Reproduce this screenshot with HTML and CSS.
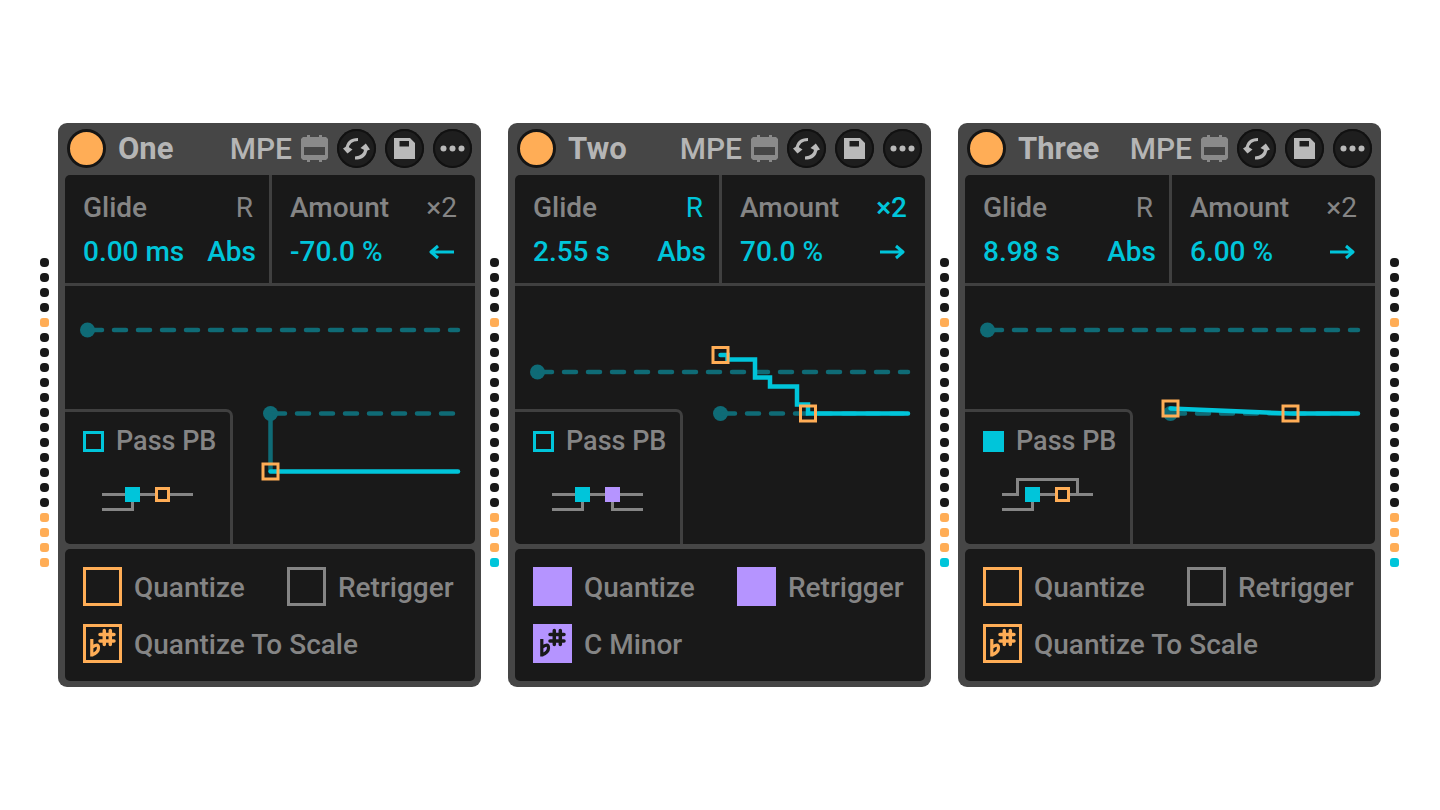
FILE: index.html
```
<!DOCTYPE html>
<html lang="en">
<head>
<meta charset="utf-8">
<title>Glide devices</title>
<link rel="stylesheet" href="styles.css">
</head>
<body>
<svg class="defs" aria-hidden="true">
  <symbol id="chip" viewBox="0 0 27 27">
    <path fill-rule="evenodd" d="M6 0h3v2h9V0h3v2h4l2 2v19l-2 2h-4v2h-3v-2H9v2H6v-2H2l-2-2V4l2-2h4zM3 12v8h21v-8z" fill="#8a8a8a"/>
  </symbol>
  <symbol id="swap" viewBox="0 0 39 39">
    <path d="M21 10.500Q11 10.500 10 20" fill="none" stroke="#b9b9b9" stroke-width="3.200"/>
    <path d="M6 19.500L10.500 24.500L15.500 20.500L10 17z" fill="#b9b9b9"/>
    <path d="M18 29Q28 29 29 19.500" fill="none" stroke="#b9b9b9" stroke-width="3.200"/>
    <path d="M23.500 19L28.800 14.500L33 20.500L29 22z" fill="#b9b9b9"/>
  </symbol>
  <symbol id="save" viewBox="0 0 39 39">
    <path fill-rule="evenodd" d="M9 9h16l5 5v16H9zM14.500 12v5.500h9.500v-5.500z" fill="#b9b9b9"/>
  </symbol>
  <symbol id="more" viewBox="0 0 39 39">
    <g fill="#b9b9b9"><circle cx="10.500" cy="19.500" r="3"/><circle cx="19.500" cy="19.500" r="3"/><circle cx="28.500" cy="19.500" r="3"/></g>
  </symbol>
  <symbol id="arrow" viewBox="0 0 26 16">
    <path d="M1 8H24M17 2L24 8L17 14" fill="none" stroke="currentColor" stroke-width="3" stroke-linejoin="round"/>
  </symbol>
  <symbol id="scale" viewBox="0 0 39 39">
    <path d="M8.800 15V32.500M8.800 23.500Q15.500 18.500 15.500 24Q15.500 28.500 8.800 31" fill="none" stroke="currentColor" stroke-width="3.200"/>
    <path d="M21.300 6.500V20.500M27.300 6.500V20.500M17 10.500H31M17 17H31" fill="none" stroke="currentColor" stroke-width="3.500" stroke-linecap="round"/>
  </symbol>
</svg>

<main class="rack">
  <div class="meter" aria-hidden="true"><i></i><i></i><i></i><i></i><i class="on"></i><i></i><i></i><i></i><i></i><i></i><i></i><i></i><i></i><i></i><i></i><i></i><i></i><i class="on"></i><i class="on"></i><i class="on"></i><i class="on"></i></div>

  <section class="device">
    <header class="bar">
      <button class="power" aria-label="Device on"></button>
      <h2 class="title">One</h2>
      <button class="mpe">MPE</button>
      <svg class="chip"><use href="#chip"/></svg>
      <button class="round" aria-label="Swap"><svg><use href="#swap"/></svg></button>
      <button class="round" aria-label="Save"><svg><use href="#save"/></svg></button>
      <button class="round" aria-label="More"><svg><use href="#more"/></svg></button>
    </header>
    <div class="panel">
      <div class="params">
        <div class="param">
          <span>Glide</span><button class="switch">R</button>
          <output class="value">0.00 ms</output><button class="value">Abs</button>
        </div>
        <div class="param">
          <span>Amount</span><button class="switch">×2</button>
          <output class="value">-70.0 %</output><button class="value" aria-label="Left"><svg class="arrow left"><use href="#arrow"/></svg></button>
        </div>
      </div>
      <div class="view">
        <svg class="curve" viewBox="0 0 410 258" stroke-width="4.500">
          <g class="target">
            <circle cx="22.500" cy="44" r="7.500"/><path class="dash" d="M25 44H393"/>
            <circle cx="205.500" cy="127.500" r="7.500"/><path class="dash" d="M208 127.500H391"/>
            <path d="M205.500 127.500V185.500"/>
          </g>
          <path class="line" d="M205.500 185.500H393"/>
          <rect class="handle" x="198" y="178" width="15" height="15"/>
        </svg>
        <div class="pass">
          <label class="check middle"><input type="checkbox" class="box small cyan">Pass PB</label>
          <svg class="route" viewBox="0 0 91 33">
            <path class="wire" d="M0 16.500H91M0 31.500H30.500V16.500"/>
            <rect x="23" y="9" width="15" height="15" fill="#00c5da"/>
            <rect x="54.500" y="10.500" width="12" height="12" fill="#191919" stroke="#ffad56" stroke-width="3"/>
          </svg>
        </div>
      </div>
    </div>
    <div class="panel options">
      <label class="check"><input type="checkbox" class="box orange">Quantize</label>
      <label class="check"><input type="checkbox" class="box grey">Retrigger</label>
      <label class="check wide"><span class="stack orange"><input type="checkbox" class="box orange"><svg class="sign"><use href="#scale"/></svg></span>Quantize To Scale</label>
    </div>
  </section>

  <div class="meter" aria-hidden="true"><i></i><i></i><i></i><i></i><i class="on"></i><i></i><i></i><i></i><i></i><i></i><i></i><i></i><i></i><i></i><i></i><i></i><i></i><i class="on"></i><i class="on"></i><i class="on"></i><i class="low"></i></div>

  <section class="device">
    <header class="bar">
      <button class="power" aria-label="Device on"></button>
      <h2 class="title">Two</h2>
      <button class="mpe">MPE</button>
      <svg class="chip"><use href="#chip"/></svg>
      <button class="round" aria-label="Swap"><svg><use href="#swap"/></svg></button>
      <button class="round" aria-label="Save"><svg><use href="#save"/></svg></button>
      <button class="round" aria-label="More"><svg><use href="#more"/></svg></button>
    </header>
    <div class="panel">
      <div class="params">
        <div class="param">
          <span>Glide</span><button class="switch active">R</button>
          <output class="value">2.55 s</output><button class="value">Abs</button>
        </div>
        <div class="param">
          <span>Amount</span><button class="switch active bold">×2</button>
          <output class="value">70.0 %</output><button class="value" aria-label="Right"><svg class="arrow"><use href="#arrow"/></svg></button>
        </div>
      </div>
      <div class="view">
        <svg class="curve" viewBox="0 0 410 258" stroke-width="4.500">
          <g class="target">
            <circle cx="22.500" cy="86" r="7.500"/><path class="dash" d="M25 86H393"/>
            <circle cx="205.500" cy="127.500" r="7.500"/><path class="dash" d="M208 127.500H391"/>
          </g>
          <path class="line" d="M205.500 69H212.500V73.500H240V91.500H255V100.500H282V118.500H293V127.500H393"/>
          <rect class="handle" x="198" y="61.500" width="15" height="15"/>
          <rect class="handle" x="285.500" y="120" width="15" height="15"/>
        </svg>
        <div class="pass">
          <label class="check middle"><input type="checkbox" class="box small cyan">Pass PB</label>
          <svg class="route" viewBox="0 0 91 33">
            <path class="wire" d="M0 16.500H91M0 31.500H30.500V16.500M91 31.500H60.500V16.500"/>
            <rect x="23" y="9" width="15" height="15" fill="#00c5da"/>
            <rect x="53" y="9" width="15" height="15" fill="#b594ff"/>
          </svg>
        </div>
      </div>
    </div>
    <div class="panel options">
      <label class="check"><input type="checkbox" class="box violet" checked>Quantize</label>
      <label class="check"><input type="checkbox" class="box violet" checked>Retrigger</label>
      <label class="check wide"><span class="stack"><input type="checkbox" class="box violet" checked><svg class="sign"><use href="#scale"/></svg></span>C Minor</label>
    </div>
  </section>

  <div class="meter" aria-hidden="true"><i></i><i></i><i></i><i></i><i class="on"></i><i></i><i></i><i></i><i></i><i></i><i></i><i></i><i></i><i></i><i></i><i></i><i></i><i class="on"></i><i class="on"></i><i class="on"></i><i class="low"></i></div>

  <section class="device">
    <header class="bar">
      <button class="power" aria-label="Device on"></button>
      <h2 class="title">Three</h2>
      <button class="mpe">MPE</button>
      <svg class="chip"><use href="#chip"/></svg>
      <button class="round" aria-label="Swap"><svg><use href="#swap"/></svg></button>
      <button class="round" aria-label="Save"><svg><use href="#save"/></svg></button>
      <button class="round" aria-label="More"><svg><use href="#more"/></svg></button>
    </header>
    <div class="panel">
      <div class="params">
        <div class="param">
          <span>Glide</span><button class="switch">R</button>
          <output class="value">8.98 s</output><button class="value">Abs</button>
        </div>
        <div class="param">
          <span>Amount</span><button class="switch">×2</button>
          <output class="value">6.00 %</output><button class="value" aria-label="Right"><svg class="arrow"><use href="#arrow"/></svg></button>
        </div>
      </div>
      <div class="view">
        <svg class="curve" viewBox="0 0 410 258" stroke-width="4.500">
          <g class="target">
            <circle cx="22.500" cy="44" r="7.500"/><path class="dash" d="M25 44H393"/>
            <circle cx="205.500" cy="127.500" r="7.500"/><path class="dash" d="M208 127.500H391"/>
          </g>
          <path class="line" d="M205.500 122.500L325.500 127.500H393"/>
          <rect class="handle" x="198" y="115" width="15" height="15"/>
          <rect class="handle" x="318" y="120" width="15" height="15"/>
        </svg>
        <div class="pass">
          <label class="check middle"><input type="checkbox" class="box small cyan" checked>Pass PB</label>
          <svg class="route" viewBox="0 0 91 33">
            <path class="wire" d="M0 16.500H15.500V1.500H75.500V16.500M23 16.500H91M0 31.500H30.500V16.500"/>
            <rect x="23" y="9" width="15" height="15" fill="#00c5da"/>
            <rect x="54.500" y="10.500" width="12" height="12" fill="#191919" stroke="#ffad56" stroke-width="3"/>
          </svg>
        </div>
      </div>
    </div>
    <div class="panel options">
      <label class="check"><input type="checkbox" class="box orange">Quantize</label>
      <label class="check"><input type="checkbox" class="box grey">Retrigger</label>
      <label class="check wide"><span class="stack orange"><input type="checkbox" class="box orange"><svg class="sign"><use href="#scale"/></svg></span>Quantize To Scale</label>
    </div>
  </section>

  <div class="meter" aria-hidden="true"><i></i><i></i><i></i><i></i><i class="on"></i><i></i><i></i><i></i><i></i><i></i><i></i><i></i><i></i><i></i><i></i><i></i><i></i><i class="on"></i><i class="on"></i><i class="on"></i><i class="low"></i></div>
</main>
</body>
</html>
```
FILE: styles.css
```
* {
  box-sizing: border-box;
}

body {
  margin: 0;
  min-height: 100vh;
  display: flex;
  align-items: center;
  background: #fff;
  color: #858585;
  font: 500 28px/44px Roboto, "Liberation Sans", sans-serif;
}

button {
  padding: 0;
  border: 0;
  background: none;
  color: inherit;
  font: inherit;
}

.defs {
  position: absolute;
  width: 0;
  height: 0;
}

.rack {
  flex: 1;
  display: flex;
  align-items: center;
  gap: 9px;
  padding: 0 41px 0 40px;
}

.meter {
  display: flex;
  flex-direction: column;
  gap: 6px;
  padding-top: 15px;
}

.meter i {
  width: 9px;
  height: 9px;
  border-radius: 4px;
  background: #191919;
}

.meter .on,
.meter .low {
  border-radius: 3px;
  background: #ffad56;
}

.meter .low {
  background: #00c5da;
}

.device {
  flex: 1;
  min-width: 0;
  padding: 0 6px 6px 7px;
  border-radius: 9px;
  background: #464646;
}

.bar {
  display: flex;
  align-items: center;
  height: 52px;
  padding: 0 3px 1px 2px;
  gap: 9px;
  color: #b5b5b5;
}

.power {
  width: 39px;
  height: 39px;
  border: 3px solid #151515;
  border-radius: 50%;
  background: #ffad56;
}

.title {
  flex: 1;
  margin: 0 0 0 3px;
  font-size: 31px;
  font-weight: 700;
}

.mpe {
  font-size: 30px;
}

.chip {
  width: 27px;
  height: 27px;
}

.round {
  width: 39px;
  height: 39px;
  border-radius: 50%;
  background: #1e1e1e;
  box-shadow: inset 0 0 0 2px #111;
}

.round svg {
  display: block;
  width: 39px;
  height: 39px;
}

.panel {
  border-radius: 5px;
  background: #191919;
}

.params {
  display: grid;
  grid-template-columns: 207fr 203fr;
  border-bottom: 3px solid #404040;
}

.param {
  display: grid;
  grid-template-columns: 1fr auto;
  padding: 11px 18px 9px;
}

.param:first-child {
  padding-right: 13px;
  border-right: 3px solid #404040;
}

.switch {
  justify-self: end;
  font-weight: 400;
}

.param:first-child .switch {
  padding-right: 3px;
}

.value,
.active {
  color: #00c5da;
}

.bold {
  font-weight: 500;
}

.arrow {
  display: block;
  width: 26px;
  height: 16px;
  margin-left: auto;
  margin-right: 2px;
}

.left {
  transform: scaleX(-1);
}

.view {
  display: grid;
}

.curve,
.pass {
  grid-area: 1 / 1;
}

.curve {
  display: block;
  width: 100%;
}

.target {
  fill: #0f6b76;
}

.target path {
  fill: none;
  stroke: #0f6b76;
}

.target .dash {
  stroke-linecap: round;
  stroke-dasharray: 12 12;
}

.line {
  fill: none;
  stroke: #00c5da;
  stroke-linecap: round;
}

.handle {
  fill: none;
  stroke: #ffad56;
  stroke-width: 3;
}

.pass {
  align-self: end;
  justify-self: start;
  width: 168px;
  padding: 8px 0 33px 18px;
  border: solid #404040;
  border-width: 3px 3px 0 0;
  border-radius: 0 7px 0 0;
}

.route {
  display: block;
  width: 91px;
  height: 33px;
  margin: 16px 0 0 19px;
}

.wire {
  fill: none;
  stroke: #858585;
  stroke-width: 3;
}

.check {
  display: flex;
  align-items: flex-start;
  gap: 12px;
  line-height: 42px;
  white-space: nowrap;
}

.middle {
  align-items: center;
  font-size: 27px;
}

.box {
  appearance: none;
  width: 39px;
  height: 39px;
  margin: 0;
  border: 3px solid currentColor;
}

.box:checked {
  background: currentColor;
}

.small {
  width: 21px;
  height: 21px;
}

.cyan {
  color: #00c5da;
}

.orange {
  color: #ffad56;
}

.grey {
  color: #858585;
}

.violet {
  color: #b594ff;
}

.options {
  display: grid;
  grid-template-columns: 204fr 172fr;
  row-gap: 15px;
  margin-top: 5px;
  padding: 18px 16px 15px 18px;
}

.wide {
  grid-column: 1 / -1;
}

.stack {
  display: grid;
}

.stack:not(.orange) {
  color: #191919;
}

.stack > * {
  grid-area: 1 / 1;
}

.sign {
  width: 39px;
  height: 39px;
  pointer-events: none;
}
```
